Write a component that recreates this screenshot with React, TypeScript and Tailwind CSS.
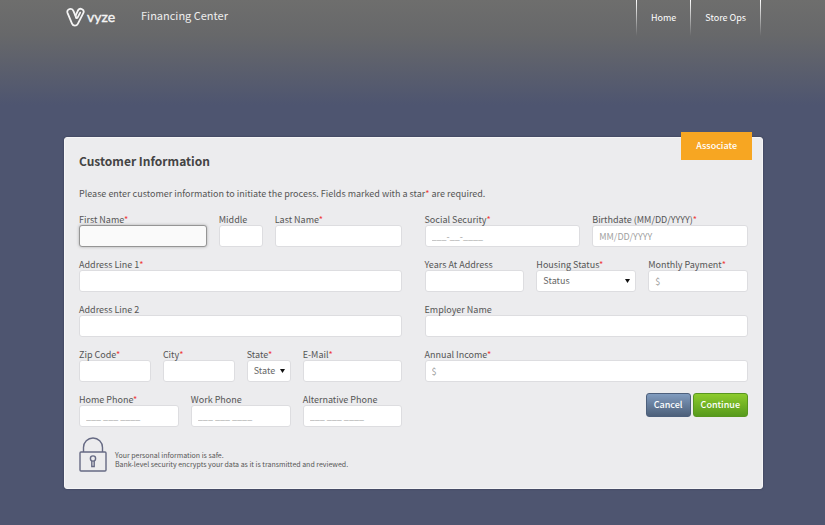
import type { ReactNode } from "react";

interface FieldProps {
	id: string;
	label: string;
	span: string;
	required?: boolean;
	children?: ReactNode;
	placeholder?: string;
	type?: string;
	autoFocus?: boolean;
}

const controlClass =
	"block h-[22px] w-full rounded-[3px] border border-[#dddde0] bg-white text-[9px] leading-5 text-[#666]";

function Field({
	id,
	label,
	span,
	required,
	children,
	placeholder,
	type = "text",
	autoFocus,
}: FieldProps) {
	return (
		<div className={`min-w-0 ${span}`}>
			<label
				className="relative z-10 block h-3 whitespace-nowrap text-[9px] leading-[14px]"
				htmlFor={id}
			>
				{label}
				{required && <span className="text-[#ef3b3b]">*</span>}
			</label>
			{children ?? (
				<input
					autoFocus={autoFocus}
					className={`${controlClass} px-1.5 placeholder:text-[#a0a0a0] focus:border-[#959595] focus:bg-[#fafafa] focus:caret-transparent focus:shadow-[0_0_3px_#aaa] focus:outline-none`}
					id={id}
					placeholder={placeholder}
					type={type}
				/>
			)}
		</div>
	);
}

function SelectBox({
	id,
	text,
	options,
}: {
	id: string;
	text: string;
	options: string[];
}) {
	return (
		<div className="relative">
			<select
				className={`${controlClass} appearance-none pl-1.5`}
				defaultValue=""
				id={id}
			>
				<option value="">{text}</option>
				{options.map((option) => (
					<option key={option}>{option}</option>
				))}
			</select>
			<svg
				aria-hidden="true"
				className="pointer-events-none absolute top-[9px] right-1.5 h-1 w-[5px]"
				viewBox="0 0 5 4"
			>
				<path d="M0 0h5L2.5 4z" fill="#111" />
			</svg>
		</div>
	);
}

function Logo() {
	return (
		<a className="flex items-center gap-px text-[#f4f4f4]" href="#home">
			<svg
				aria-hidden="true"
				className="h-5 w-5"
				fill="none"
				stroke="currentColor"
				strokeLinecap="round"
				strokeLinejoin="round"
				strokeWidth="1.8"
				viewBox="0 0 20 20"
			>
				<path d="M10.2 10.6 7.4 3.8C6 .4.2 2 1.5 5.8L6 16.6c1.1 2.7 4.6 2.5 5.8.2l5.5-10.6c1.8-3.6-3.3-6.2-5.3-2.8" />
				<path d="M12 3.4 9.6 8.6M14.2 5.6l-2.6 5c-.4.8-1.2.8-1.6 0" />
			</svg>
			<span className="font-['Lato',sans-serif] text-[14px] leading-5 [-webkit-text-stroke:0.4px]">
				vyze
			</span>
		</a>
	);
}

function NavDivider() {
	return <span className="h-9 w-px bg-linear-to-b from-white to-transparent" />;
}

function PadLock() {
	return (
		<svg
			aria-hidden="true"
			className="h-[35px] w-7"
			fill="none"
			stroke="#666a84"
			strokeWidth="1.4"
			viewBox="0 0 28 35"
		>
			<rect height="19" rx="1" width="26" x="1" y="15" />
			<path d="M4.5 15v-4.5a9.5 9.5 0 0 1 19 0V15" />
			<circle cx="14" cy="21.5" r="2.6" />
			<path d="M12.8 24v5.5h2.4V24" />
		</svg>
	);
}

export default function App() {
	return (
		<div className="min-h-screen bg-[#4e5570] bg-[linear-gradient(#6e6e6d_0px,#67686a_35px,#4e5570_105px)] pb-9 font-['Noto_Sans_CJK_SC',sans-serif] text-[#555]">
			<header className="flex h-[137px] items-start justify-between pr-16 pl-[66px]">
				<div className="flex items-start gap-[26px]">
					<div className="pt-[7px]">
						<Logo />
					</div>
					<h1 className="pt-1.5 text-[11px] text-[#eee] leading-[18px]">
						Financing Center
					</h1>
				</div>
				<nav className="flex text-[9px] text-white leading-9">
					<NavDivider />
					<a className="px-[14px]" href="#home">
						Home
					</a>
					<NavDivider />
					<a className="px-[14px]" href="#store-ops">
						Store Ops
					</a>
					<NavDivider />
				</nav>
			</header>

			<main className="relative mr-[62px] ml-16 rounded-[3px] border border-[#f5f5f6] bg-[#ececee] px-3.5 pt-[15px] pb-4 shadow-[0_0_2px_#33384d]">
				<span className="absolute -top-1.5 right-2.5 bg-[#f7a622] px-[15px] font-medium text-[9px] text-white leading-7">
					Associate
				</span>
				<h2 className="font-bold text-[12px] text-[#444] leading-4">
					Customer Information
				</h2>
				<p className="mt-[17px] text-[9px] leading-4">
					Please enter customer information to initiate the process. Fields
					marked with a star<span className="text-[#ef3b3b]">*</span> are
					required.
				</p>

				<form className="mt-[11px] grid grid-cols-2 gap-x-[22px]">
					<div className="grid grid-cols-12 gap-x-3 gap-y-[11px]">
						<Field
							autoFocus
							id="first-name"
							label="First Name"
							required
							span="col-span-5"
						/>
						<Field id="middle" label="Middle" span="col-span-2" />
						<Field
							id="last-name"
							label="Last Name"
							required
							span="col-span-5"
						/>
						<Field
							id="address-1"
							label="Address Line 1"
							required
							span="col-span-12"
						/>
						<Field id="address-2" label="Address Line 2" span="col-span-12" />
						<Field id="zip" label="Zip Code" required span="col-span-3" />
						<Field id="city" label="City" required span="col-span-3" />
						<Field id="state" label="State" required span="col-span-2">
							<SelectBox
								id="state"
								options={["CA", "NY", "TX"]}
								text="State"
							/>
						</Field>
						<Field
							id="email"
							label="E-Mail"
							required
							span="col-span-4"
							type="email"
						/>
						<Field
							id="home-phone"
							label="Home Phone"
							placeholder="___ ___ ____"
							required
							span="col-span-4"
							type="tel"
						/>
						<Field
							id="work-phone"
							label="Work Phone"
							placeholder="___ ___ ____"
							span="col-span-4"
							type="tel"
						/>
						<Field
							id="alt-phone"
							label="Alternative Phone"
							placeholder="___ ___ ____"
							span="col-span-4"
							type="tel"
						/>
					</div>

					<div className="grid grid-cols-12 content-start gap-x-3 gap-y-[11px]">
						<Field
							id="ssn"
							label="Social Security"
							placeholder="___-__-____"
							required
							span="col-span-6"
						/>
						<Field
							id="birthdate"
							label="Birthdate (MM/DD/YYYY)"
							placeholder="MM/DD/YYYY"
							required
							span="col-span-6"
						/>
						<Field id="years" label="Years At Address" span="col-span-4" />
						<Field
							id="housing"
							label="Housing Status"
							required
							span="col-span-4"
						>
							<SelectBox
								id="housing"
								options={["Own", "Rent", "Other"]}
								text="Status"
							/>
						</Field>
						<Field
							id="payment"
							label="Monthly Payment"
							placeholder="$"
							required
							span="col-span-4"
						/>
						<Field id="employer" label="Employer Name" span="col-span-12" />
						<Field
							id="income"
							label="Annual Income"
							placeholder="$"
							required
							span="col-span-12"
						/>
						<div className="col-span-12 flex justify-end gap-0.5">
							<button
								className="h-6 rounded-[3px] border border-[#4d607c] bg-linear-to-b from-[#819cbf] to-[#4d607a] px-[7px] font-medium text-[9px] text-white leading-5"
								type="button"
							>
								Cancel
							</button>
							<button
								className="h-6 rounded-[3px] border border-[#58961f] bg-linear-to-b from-[#8ccb2c] to-[#579a1c] px-[7px] font-medium text-[9px] text-white leading-5"
								type="submit"
							>
								Continue
							</button>
						</div>
					</div>
				</form>

				<div className="mt-2.5 flex items-end gap-2">
					<PadLock />
					<p className="pb-[3px] text-[7px] leading-[9px]">
						Your personal information is safe.
						<br />
						Bank-level security encrypts your data as it is transmitted and
						reviewed.
					</p>
				</div>
			</main>
		</div>
	);
}
